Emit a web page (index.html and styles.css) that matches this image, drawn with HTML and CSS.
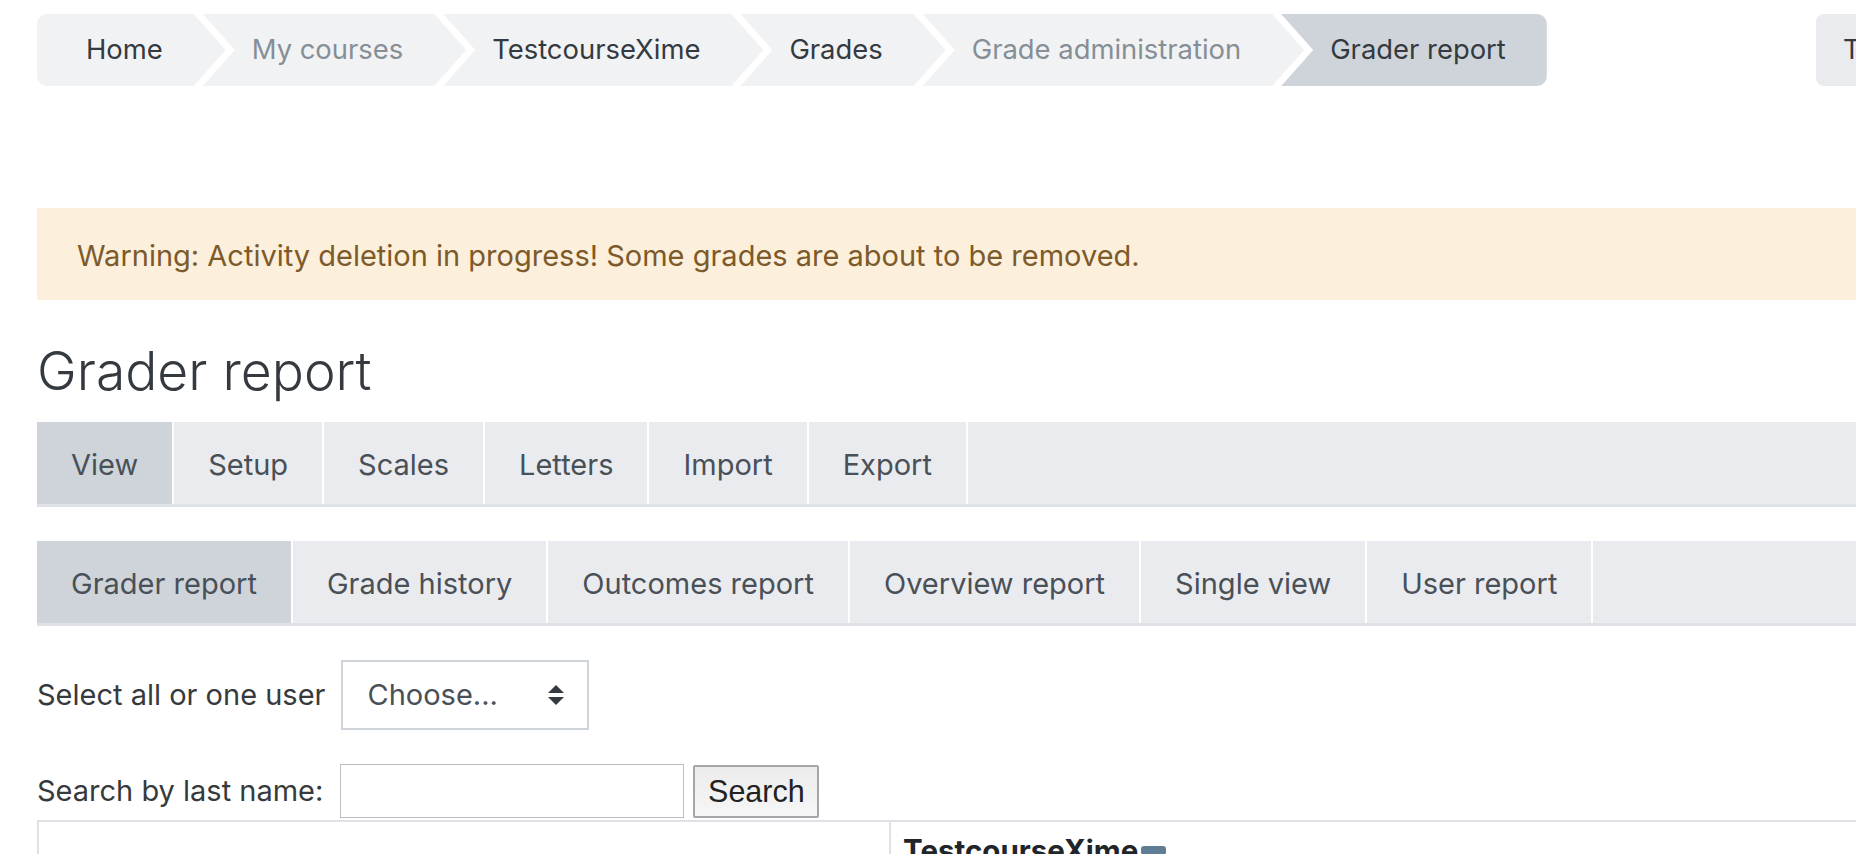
FILE: index.html
```html
<!DOCTYPE html>
<html>
<head>
  <meta charset="UTF-8">
  <title>TestcourseXime: View: Grader report</title>
  <link rel="stylesheet" href="styles.css">
</head>
<body>
  <div class="page">
    <header class="page-header">
      <ol class="breadcrumb">
        <li class="crumb"><a href="#">Home</a></li>
        <li class="crumb muted">My courses</li>
        <li class="crumb"><a href="#">TestcourseXime</a></li>
        <li class="crumb"><a href="#">Grades</a></li>
        <li class="crumb muted">Grade administration</li>
        <li class="crumb active">Grader report</li>
      </ol>
      <button type="button" class="edit-btn">Turn editing on</button>
    </header>

    <div class="alert-warning">
      Warning: Activity deletion in progress! Some grades are about to be removed.
    </div>

    <h2 class="page-title">Grader report</h2>

    <ul class="tabs">
      <li class="tab active">View</li>
      <li class="tab">Setup</li>
      <li class="tab">Scales</li>
      <li class="tab">Letters</li>
      <li class="tab">Import</li>
      <li class="tab">Export</li>
    </ul>

    <ul class="tabs">
      <li class="tab active">Grader report</li>
      <li class="tab">Grade history</li>
      <li class="tab">Outcomes report</li>
      <li class="tab">Overview report</li>
      <li class="tab">Single view</li>
      <li class="tab">User report</li>
    </ul>

    <form class="filter-row">
      <label for="choosegradeuser">Select all or one user</label>
      <div class="select-wrap">
        <select id="choosegradeuser">
          <option>Choose...</option>
          <option>All users</option>
        </select>
        <svg class="select-arrow" width="16" height="20" viewBox="0 0 16 20">
          <path d="M8 0 L16 8 L0 8 Z" fill="#343a40"/>
          <path d="M0 12 L16 12 L8 20 Z" fill="#343a40"/>
        </svg>
      </div>
    </form>

    <form class="filter-row search-row">
      <label for="searchlast">Search by last name:</label>
      <input type="text" id="searchlast">
      <button type="button" class="search-btn">Search</button>
    </form>

    <table class="gradebook">
      <tr>
        <th class="topleft"></th>
        <th class="course-head">TestcourseXime<span class="collapse-icon"></span></th>
      </tr>
    </table>
  </div>
</body>
</html>
```

FILE: styles.css
```css
:root {
  --text: #373a3c;
  --muted: #868e96;
  --crumb-bg: #f1f2f4;
  --tab-bg: #e9ebef;
  --active-bg: #ced4da;
  --border: #dee2e6;
}

html, body {
  overflow: hidden;
}

body {
  margin: 0;
  font-family: Inter, Roboto, sans-serif;
  font-size: 29px;
  line-height: 1.5;
  color: var(--text);
  background: #fff;
}

.page {
  width: 2079px;
  margin-left: 37px;
  padding-top: 14px;
}

/* breadcrumb + editing button */
.page-header {
  display: flex;
  align-items: flex-start;
  justify-content: space-between;
}

.breadcrumb {
  display: flex;
  list-style: none;
  margin: 0;
  padding: 0;
  border-radius: 10px;
  overflow: hidden;
  font-size: 27.4px;
}

.crumb {
  display: flex;
  align-items: center;
  height: 72px;
  padding: 0 63px 0 49px;
  margin-left: -23px;
  background: var(--crumb-bg);
  color: #343a40;
  white-space: nowrap;
  clip-path: polygon(0 0, calc(100% - 32px) 0, 100% 50%, calc(100% - 32px) 100%, 0 100%, 32px 50%);
}

.crumb:first-child {
  margin-left: 0;
  clip-path: polygon(0 0, calc(100% - 32px) 0, 100% 50%, calc(100% - 32px) 100%, 0 100%);
}

.crumb a {
  color: #343a40;
  text-decoration: none;
}

.crumb.muted {
  color: var(--muted);
}

.crumb.active {
  background: var(--active-bg);
  padding-right: 41px;
  clip-path: polygon(0 0, 100% 0, 100% 100%, 0 100%, 32px 50%);
}

.edit-btn {
  width: 300px;
  height: 72px;
  border: 0;
  border-radius: 8px;
  background: var(--tab-bg);
  color: #343a40;
  font: inherit;
  font-size: 27.4px;
  text-align: left;
  padding: 0 27px;
  white-space: nowrap;
}

/* notification */
.alert-warning {
  margin-top: 122px;
  padding: 27px 40px 23px;
  line-height: 42px;
  background: #fcefdc;
  color: #7d5a29;
}

.page-title {
  margin: 39px 0 19px;
  font-size: 53.4px;
  font-weight: 300;
  line-height: 64px;
  color: #343a40;
}

/* tab rows */
.tabs {
  display: flex;
  list-style: none;
  margin: 0 0 34px;
  padding: 0;
  background: var(--tab-bg);
  border-bottom: 3px solid var(--border);
}

.tab {
  display: flex;
  align-items: center;
  height: 82px;
  padding: 3px 34px 0;
  box-sizing: border-box;
  border-right: 2px solid #fff;
  color: #495057;
  white-space: nowrap;
}

.tab.active {
  background: var(--active-bg);
}

/* filters */
.filter-row {
  display: flex;
  align-items: center;
  gap: 16px;
  margin: 0 0 34px;
}

.search-row {
  gap: 9px;
  margin-bottom: 2px;
}

.search-row label {
  margin-right: 8px;
}

.select-wrap {
  display: grid;
  align-items: center;
}

.select-wrap select,
.select-arrow {
  grid-area: 1 / 1;
}

.select-wrap select {
  appearance: none;
  -webkit-appearance: none;
  width: 248px;
  height: 70px;
  padding: 0 60px 0 24px;
  border: 2px solid var(--active-bg);
  border-radius: 0;
  background: #fff;
  color: #495057;
  font: inherit;
}

.select-arrow {
  justify-self: end;
  margin-right: 25px;
  pointer-events: none;
}

.search-row input {
  width: 344px;
  height: 54px;
  box-sizing: border-box;
  border: 1px solid #bdbdbd;
  font: inherit;
}

.search-btn {
  width: 126px;
  height: 53px;
  box-sizing: border-box;
  border: 2px solid #a6a6a6;
  border-radius: 2px;
  background: linear-gradient(#ececec, #f6f6f6);
  font-family: "Liberation Sans", Arial, sans-serif;
  font-size: 30.5px;
  color: #222;
  padding: 0;
}

/* grade table */
.gradebook {
  border-collapse: collapse;
  border-top: 2px solid var(--border);
  border-left: 2px solid var(--border);
}

.gradebook th {
  height: 120px;
  vertical-align: top;
  text-align: left;
  padding: 11px 12px;
}

.topleft {
  width: 826px;
  border-right: 2px solid var(--border);
}

.course-head {
  width: 1100px;
  font-weight: 700;
  font-size: 29.5px;
  color: #212529;
  line-height: 1.2;
}

.collapse-icon {
  display: inline-block;
  width: 25px;
  height: 9px;
  margin-left: 3px;
  vertical-align: 6px;
  border-radius: 3px;
  background: #5f7d95;
}
```
